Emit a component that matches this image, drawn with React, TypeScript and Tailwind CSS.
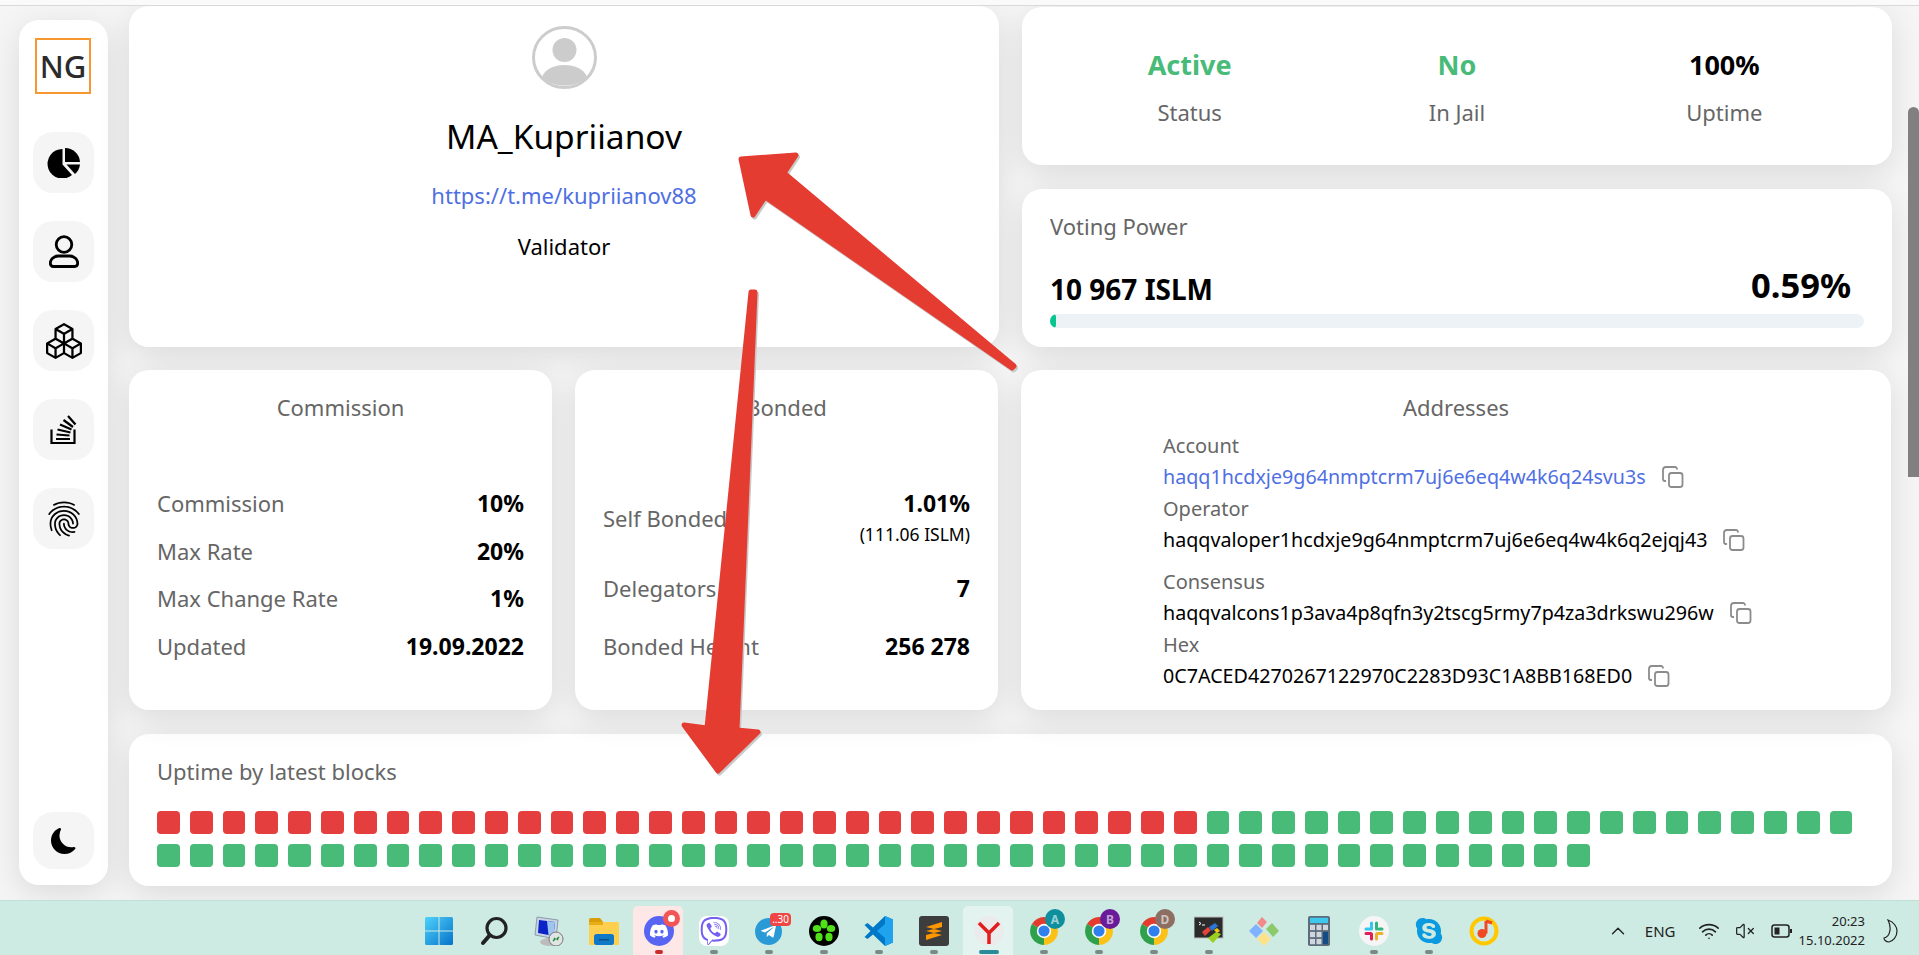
import { ChevronUp, VolumeX, Wifi } from "lucide-react";
import { BsBoxes, BsMoonFill } from "react-icons/bs";
import { FaSkype, FaTelegramPlane } from "react-icons/fa";
import { MdFingerprint } from "react-icons/md";
import { SiDiscord, SiViber } from "react-icons/si";

const card = "rounded-[20px] bg-white shadow-[0_8px_32px_rgba(0,0,0,0.11)]";

function PieIcon() {
  return (
    <svg width="33" height="30" viewBox="0 0 33 30" fill="#000">
      <path d="M15.500 1V16.500L25 27A14.800 14.800 0 1 1 15.500 1Z" />
      <path d="M18 0A15 15 0 0 1 33 14H18Z" />
      <path d="M19.500 16.500H33A15 15 0 0 1 28 26Z" />
    </svg>
  );
}

function UserIcon() {
  return (
    <svg width="30" height="33" viewBox="0 0 30 33" fill="none" stroke="#000" strokeWidth="2.800">
      <circle cx="15" cy="9.500" r="7.800" />
      <path d="M9.500 21h11c5 0 8.200 3.500 8.200 7 0 2-1.200 3.500-3 3.500H4.300c-1.800 0-3-1.500-3-3.500 0-3.500 3.200-7 8.200-7z" />
    </svg>
  );
}

function StackIcon() {
  return (
    <svg width="27" height="31" viewBox="0 0 27 31" fill="none" stroke="#000" strokeWidth="2.200">
      <path d="M1.500 15.500V29H24.500V15.500" />
      <path d="M6 25H20M6.500 20.500L19.500 21.500M7.500 15.500L20.500 18.500M10 10.500L21.500 15.500M13.500 6L23 13M18 2L25.500 10.500" />
    </svg>
  );
}

function CopyIcon() {
  return (
    <svg width="22" height="22" viewBox="0 0 22 22" fill="none" stroke="#8c8c8c" strokeWidth="1.8" className="shrink-0">
      <rect x="7" y="7" width="13.500" height="14" rx="2.500" />
      <path d="M15 3.500V3a2 2 0 0 0-2-2H4a3 3 0 0 0-3 3v9a2 2 0 0 0 2 2h1" />
    </svg>
  );
}

function Sidebar() {
  const icons = [<PieIcon />, <UserIcon />, <BsBoxes size={36} />, <StackIcon />, <MdFingerprint size={42} />];
  return (
    <aside className={`${card} ml-[19px] mt-[14px] flex h-[865px] w-[89px] flex-col items-center pt-[18px] pb-[16px]`}>
      <div className="-ml-[1px] flex h-[56px] w-[56px] items-center justify-center border-2 border-[#f7972f] text-[31px] font-medium text-[#2b2b2b]">
        NG
      </div>
      <div className="mt-[38px] flex flex-col gap-[28px]">
        {icons.map((icon, i) => (
          <button key={i} className="flex h-[61px] w-[61px] items-center justify-center rounded-[20px] bg-[#f5f5f5] text-black">
            {icon}
          </button>
        ))}
      </div>
      <button className="mt-auto flex h-[57px] w-[61px] items-center justify-center rounded-[20px] bg-[#f5f5f5] text-black">
        <BsMoonFill size={26} />
      </button>
    </aside>
  );
}

function Profile() {
  return (
    <div className={`${card} flex h-[341px] w-[870px] flex-col items-center pt-[20px]`}>
      <svg width="65" height="63" viewBox="0 0 65 63" fill="none">
        <ellipse cx="32.500" cy="31.500" rx="31" ry="30" stroke="#cccccc" strokeWidth="3" />
        <circle cx="32.500" cy="24" r="12" fill="#cccccc" />
        <path d="M10 51c3-8 12-12 22.500-12S52 43 55 51c-6 6-14 8.500-22.500 8.500S16 57 10 51z" fill="#cccccc" />
      </svg>
      <div className="mt-[25px] text-[33.500px] leading-[44px] text-black">MA_Kupriianov</div>
      <a className="mt-[23px] text-[22px] leading-[28px] text-[#4f6fe3]">https://t.me/kupriianov88</a>
      <div className="mt-[23px] text-[22px] leading-[28px] text-black">Validator</div>
    </div>
  );
}

function Status() {
  const items = [
    { value: "Active", label: "Status", color: "text-[#48bb78]" },
    { value: "No", label: "In Jail", color: "text-[#48bb78]" },
    { value: "100%", label: "Uptime", color: "text-black" },
  ];
  return (
    <div className={`${card} grid h-[158px] grid-cols-3 px-[34px] pt-[42px]`}>
      {items.map((item) => (
        <div key={item.label} className="text-center">
          <div className={`text-[27px] font-bold leading-[32px] ${item.color}`}>{item.value}</div>
          <div className="mt-[17px] text-[22px] leading-[28px] text-[#666666]">{item.label}</div>
        </div>
      ))}
    </div>
  );
}

function VotingPower() {
  return (
    <div className={`${card} h-[158px] px-[28px] pt-[23px]`}>
      <div className="text-[22px] leading-[28px] text-[#666666]">Voting Power</div>
      <div className="mt-[25px] flex items-end justify-between pr-[13px]">
        <span className="text-[28px] font-bold leading-[32px] text-black">10 967 ISLM</span>
        <span className="text-[34.500px] font-bold leading-[40px] text-black">0.59%</span>
      </div>
      <div className="mt-[9px] h-[14px] w-full overflow-hidden rounded-[7px] bg-[#edf2f7]">
        <div className="h-full w-[6px] rounded-[7px] bg-[#06c58f]" />
      </div>
    </div>
  );
}

function StatRow({ label, value }: { label: string; value: string }) {
  return (
    <div className="flex justify-between leading-[28px]">
      <span className="text-[22px] text-[#666666]">{label}</span>
      <span className="text-[23px] font-bold text-black">{value}</span>
    </div>
  );
}

function Commission() {
  return (
    <div className={`${card} h-[340px] w-[423px] px-[28px] pt-[23px]`}>
      <div className="text-center text-[22px] leading-[28px] text-[#666666]">Commission</div>
      <div className="mt-[68px] flex flex-col gap-[19.5px]">
        <StatRow label="Commission" value="10%" />
        <StatRow label="Max Rate" value="20%" />
        <StatRow label="Max Change Rate" value="1%" />
        <StatRow label="Updated" value="19.09.2022" />
      </div>
    </div>
  );
}

function Bonded() {
  return (
    <div className={`${card} h-[340px] w-[423px] px-[28px] pt-[23px]`}>
      <div className="text-center text-[22px] leading-[28px] text-[#666666]">Bonded</div>
      <div className="mt-[68px] flex items-center justify-between">
        <span className="text-[22px] leading-[28px] text-[#666666]">Self Bonded</span>
        <div className="text-right">
          <div className="text-[23px] font-bold leading-[28px] text-black">1.01%</div>
          <div className="mt-[5px] text-[17.500px] leading-[24px] text-black">(111.06 ISLM)</div>
        </div>
      </div>
      <div className="mt-[28px]">
        <StatRow label="Delegators" value="7" />
      </div>
      <div className="mt-[30px]">
        <StatRow label="Bonded Height" value="256 278" />
      </div>
    </div>
  );
}

function Address({ label, value, link, className }: { label: string; value: string; link?: boolean; className: string }) {
  return (
    <div className={className}>
      <div className="text-[20px] leading-[28px] text-[#666666]">{label}</div>
      <div className="mt-[3px] flex items-center gap-[16px]">
        <span className={`text-[19.700px] leading-[28px] ${link ? "text-[#4f6fe3]" : "text-black"}`}>{value}</span>
        <CopyIcon />
      </div>
    </div>
  );
}

function Addresses() {
  return (
    <div className={`${card} h-[340px] w-[870px] pt-[23px]`}>
      <div className="text-center text-[22px] leading-[28px] text-[#666666]">Addresses</div>
      <div className="ml-[142px]">
        <Address className="mt-[11px]" label="Account" value="haqq1hcdxje9g64nmptcrm7uj6e6eq4w4k6q24svu3s" link />
        <Address className="mt-[4px]" label="Operator" value="haqqvaloper1hcdxje9g64nmptcrm7uj6e6eq4w4k6q2ejqj43" />
        <Address className="mt-[14px]" label="Consensus" value="haqqvalcons1p3ava4p8qfn3y2tscg5rmy7p4za3drkswu296w" />
        <Address className="mt-[4px]" label="Hex" value="0C7ACED4270267122970C2283D93C1A8BB168ED0" />
      </div>
    </div>
  );
}

function UptimeBlocks() {
  const blocks = Array.from({ length: 96 }, (_, i) => i < 32);
  return (
    <div className={`${card} h-[152px] px-[28px] pt-[23px]`}>
      <div className="text-[22px] leading-[28px] text-[#666666]">Uptime by latest blocks</div>
      <div className="mt-[26px] flex flex-wrap gap-x-[10px] gap-y-[10px]">
        {blocks.map((red, i) => (
          <div key={i} className={`h-[23px] w-[22.800px] rounded-[4px] ${red ? "bg-[#e53e3e]" : "bg-[#48bb78]"}`} />
        ))}
      </div>
    </div>
  );
}

function Arrows() {
  return (
    <svg className="pointer-events-none absolute left-0 top-0" width="1919" height="900" viewBox="0 0 1919 900">
      <g fill="#c9c9c9" stroke="#c9c9c9" strokeWidth="5" strokeLinejoin="round" transform="translate(1.500 2)">
        <path d="M1014 366 L784 173 L796 155 L741 159 L753 215 L765 197 L1012 368 Z" />
        <path d="M755 292 L751 292 L707 728 L684 725 L718 771 L758 732 L737 730 Z" />
      </g>
      <g fill="#e53c32" stroke="#e53c32" strokeWidth="5" strokeLinejoin="round">
        <path d="M1014 366 L784 173 L796 155 L741 159 L753 215 L765 197 L1012 368 Z" />
        <path d="M755 292 L751 292 L707 728 L684 725 L718 771 L758 732 L737 730 Z" />
      </g>
    </svg>
  );
}

function WindowsIcon() {
  return (
    <svg width="30" height="30" viewBox="0 0 30 30">
      <defs>
        <linearGradient id="win" x1="0" y1="0" x2="1" y2="1">
          <stop offset="0" stopColor="#4fd2fb" />
          <stop offset="1" stopColor="#0672c9" />
        </linearGradient>
      </defs>
      <path d="M1 2.500A1.500 1.500 0 0 1 2.500 1H14.500V14.500H1zM15.500 1H27.500A1.500 1.500 0 0 1 29 2.500V14.500H15.500zM1 15.500H14.500V29H2.500A1.500 1.500 0 0 1 1 27.500zM15.500 15.500H29V27.500A1.500 1.500 0 0 1 27.500 29H15.500z" fill="url(#win)" />
    </svg>
  );
}

function SearchIcon() {
  return (
    <svg width="30" height="30" viewBox="0 0 30 30" fill="none" stroke="#222" strokeWidth="3.200" strokeLinecap="round">
      <circle cx="17.500" cy="12" r="9.500" />
      <path d="M10.500 19.500L4 27" strokeWidth="4" />
    </svg>
  );
}

function NetworkIcon() {
  return (
    <svg width="30" height="30" viewBox="0 0 30 30">
      <path d="M3 1l21 3-2 19-21-4z" fill="#c9d4e3" stroke="#7b8aa0" strokeWidth="0.800" />
      <path d="M5 4l16 2-1.500 14L4 17z" fill="#0a23c6" />
      <path d="M13 5l8 1-1.500 14-5-1z" fill="#9ec4f0" />
      <ellipse cx="16" cy="26" rx="10" ry="4" fill="#bcbcbc" />
      <circle cx="22" cy="23" r="7" fill="#dfe5e2" stroke="#777" />
      <path d="M19 25l2-2-1-1M25 21l-2 2 1 1" stroke="#1f8a3b" strokeWidth="1.500" fill="none" />
    </svg>
  );
}

function FolderIcon() {
  return (
    <svg width="30" height="30" viewBox="0 0 30 30">
      <path d="M0 4a2 2 0 0 1 2-2h9l3 4h-14z" fill="#d99e07" />
      <rect x="0" y="6" width="30" height="23" rx="1" fill="#ffd04f" />
      <rect x="0" y="6" width="14" height="3" fill="#e9ae13" />
      <rect x="5" y="18" width="20" height="11" rx="2.500" fill="#0f79c7" />
      <rect x="10" y="23" width="10" height="1.500" fill="#0a4f8a" />
    </svg>
  );
}

function DiscordIcon() {
  return (
    <div className="relative flex h-[30px] w-[30px] items-center justify-center rounded-full bg-[#5865f2] text-white">
      <SiDiscord size={18} />
      <span className="absolute right-[-6px] top-[-6px] flex h-[17px] w-[17px] items-center justify-center rounded-full bg-[#f25555]">
        <span className="h-[7px] w-[7px] rounded-full bg-white" />
      </span>
    </div>
  );
}

function ViberIcon() {
  return <SiViber size={30} className="rounded-[8px] bg-white p-[1px] text-[#7360f2]" />;
}

function TelegramIcon() {
  return (
    <div className="relative flex h-[27px] w-[27px] items-center justify-center rounded-full bg-[#2a9ad6] text-white">
      <FaTelegramPlane size={17} />
      <span className="absolute right-[-9px] top-[-5px] rounded-[4px] bg-[#f04545] px-[2px] text-[10px] leading-[13px] text-white">..30</span>
    </div>
  );
}

function IcqIcon() {
  return (
    <svg width="30" height="30" viewBox="0 0 30 30">
      <circle cx="15" cy="15" r="15" fill="#000" />
      <g fill="#4fe01a">
        <ellipse cx="15" cy="8" rx="3.600" ry="4.500" />
        <ellipse cx="8" cy="12.500" rx="4.200" ry="3.600" />
        <ellipse cx="22" cy="12.500" rx="4.200" ry="3.600" />
        <ellipse cx="10" cy="21" rx="3.600" ry="4.200" />
        <ellipse cx="20" cy="21" rx="3.600" ry="4.200" />
      </g>
    </svg>
  );
}

function VsCodeIcon() {
  return (
    <svg width="30" height="30" viewBox="0 0 30 30">
      <path d="M21 0l8 3.500v23L21 30 9 18.500 3.500 23 0.500 21 6.500 15 0.500 9 3.500 7 9 11.500z" fill="#0078c8" />
      <path d="M21 0l8 3.500v23L21 30zM21 8l-8 7 8 7z" fill="#1fa3ef" fillRule="evenodd" />
    </svg>
  );
}

function SublimeIcon() {
  return (
    <div className="flex h-[30px] w-[30px] items-center justify-center rounded-[3px] bg-[#3d3d3d]">
      <svg width="20" height="20" viewBox="0 0 20 20" fill="#ff9800">
        <path d="M18 1v5L2 10V6zM2 10l16 4v-4L2 6zM18 10v4L2 19v-5z" />
      </svg>
    </div>
  );
}

function YandexIcon() {
  return (
    <svg width="30" height="30" viewBox="0 0 30 30">
      <circle cx="15" cy="15" r="15" fill="#ebebeb" />
      <path d="M5 7l10 10 10-10M15 17v11" fill="none" stroke="#e01e1e" strokeWidth="3.500" />
    </svg>
  );
}

function ChromeIcon({ letter, color }: { letter: string; color: string }) {
  return (
    <svg width="30" height="30" viewBox="0 0 30 30" className="overflow-visible">
      <path d="M15 15L2.900 8A14 14 0 0 1 27.100 8Z" fill="#e33b2e" />
      <path d="M15 15L27.100 8A14 14 0 0 1 15 29Z" fill="#fbc116" />
      <path d="M15 15L15 29A14 14 0 0 1 2.900 8Z" fill="#2fa04c" />
      <circle cx="15" cy="15" r="7.200" fill="#fff" />
      <circle cx="15" cy="15" r="5.600" fill="#2f80ed" />
      <circle cx="26" cy="3" r="10" fill={color} />
      <text x="26" y="7.500" textAnchor="middle" fontSize="12" fontWeight="700" fill="rgba(255,255,255,0.6)">
        {letter}
      </text>
    </svg>
  );
}

function TerminalIcon() {
  return (
    <svg width="30" height="30" viewBox="0 0 30 30">
      <rect x="0" y="1" width="29" height="21" fill="#2b2b2b" stroke="#bdbdbd" strokeWidth="1" />
      <path d="M5 6l2 1.500-2 1.500" stroke="#fff" fill="none" />
      <path d="M8 9h3" stroke="#fff" />
      <path d="M8 16l6-5 3 3-6 6z" fill="#e8433a" />
      <path d="M15 11l6-4 3 3-6 5z" fill="#2c76d8" />
      <path d="M14 22l8-6 5 2-8 9z" fill="#9bd021" />
      <path d="M20 14l3-2 3 3-3 2z" fill="#f3c613" />
    </svg>
  );
}

function ToolIcon() {
  return (
    <svg width="30" height="30" viewBox="0 0 30 30">
      <path d="M0 15l7-7 7 7-7 7z" fill="#7fb2ff" />
      <path d="M17 9l6-6 7 8-6 6z" fill="#8bc96a" transform="translate(0 4)" />
      <path d="M8 7l5-6 5 5-5 6z" fill="#f28a8a" />
      <path d="M8 23l7-7 7 7-7 7z" fill="#fde28a" />
    </svg>
  );
}

function CalculatorIcon() {
  return (
    <svg width="22" height="30" viewBox="0 0 22 34" preserveAspectRatio="none">
      <rect width="22" height="34" rx="2" fill="#5d6b7a" />
      <rect x="2" y="2" width="18" height="6" fill="#3fc8ee" />
      <g fill="#cfd6dd">
        <rect x="2" y="10" width="5" height="6" />
        <rect x="8.500" y="10" width="5" height="6" />
        <rect x="15" y="10" width="5" height="6" />
        <rect x="2" y="18" width="5" height="6" />
        <rect x="8.500" y="18" width="5" height="6" />
        <rect x="2" y="26" width="5" height="6" />
        <rect x="8.500" y="26" width="5" height="6" />
      </g>
      <rect x="15" y="18" width="5" height="14" fill="#124c86" />
    </svg>
  );
}

function SlackIcon() {
  return (
    <svg width="30" height="30" viewBox="0 0 30 30">
      <circle cx="15" cy="15" r="15" fill="#f5f5f5" />
      <g strokeWidth="3" strokeLinecap="round">
        <path d="M12.500 7v6M7 13h5" stroke="#36c5f0" />
        <path d="M17.500 7v6M23 13h-3" stroke="#2eb67d" />
        <path d="M12.500 23v-5M7 17.500h5" stroke="#e01e5a" />
        <path d="M17.500 23v-5M23 17.500h-5" stroke="#ecb22e" />
      </g>
    </svg>
  );
}

function MusicIcon() {
  return (
    <svg width="30" height="30" viewBox="0 0 30 30" fill="none">
      <circle cx="15" cy="15" r="12.500" stroke="#ffc800" strokeWidth="4" />
      <path d="M17 5v12.500" stroke="#f04a23" strokeWidth="3" />
      <path d="M17 5l6 2" stroke="#f04a23" strokeWidth="3" />
      <circle cx="13" cy="17.500" r="4.500" fill="#f04a23" />
    </svg>
  );
}

function Taskbar() {
  const apps = [
    { icon: <WindowsIcon /> },
    { icon: <SearchIcon /> },
    { icon: <NetworkIcon /> },
    { icon: <FolderIcon /> },
    { icon: <DiscordIcon />, dot: "w-[8px] bg-[#c92c2c]", bg: "bg-[#fde7e7]" },
    { icon: <ViberIcon />, dot: "w-[8px] bg-[#7b8a85]" },
    { icon: <TelegramIcon />, dot: "w-[8px] bg-[#7b8a85]" },
    { icon: <IcqIcon />, dot: "w-[8px] bg-[#7b8a85]" },
    { icon: <VsCodeIcon />, dot: "w-[8px] bg-[#7b8a85]" },
    { icon: <SublimeIcon />, dot: "w-[8px] bg-[#7b8a85]" },
    { icon: <YandexIcon />, dot: "w-[20px] bg-[#2b8a9a]", bg: "bg-[#e3f3f0]" },
    { icon: <ChromeIcon letter="A" color="#0d8f9e" />, dot: "w-[8px] bg-[#7b8a85]" },
    { icon: <ChromeIcon letter="B" color="#6a1b9a" />, dot: "w-[8px] bg-[#7b8a85]" },
    { icon: <ChromeIcon letter="D" color="#8d6e63" />, dot: "w-[8px] bg-[#7b8a85]" },
    { icon: <TerminalIcon />, dot: "w-[8px] bg-[#7b8a85]" },
    { icon: <ToolIcon /> },
    { icon: <CalculatorIcon /> },
    { icon: <SlackIcon />, dot: "w-[8px] bg-[#7b8a85]" },
    { icon: <FaSkype size={30} className="text-[#0a9ae0]" />, dot: "w-[8px] bg-[#7b8a85]" },
    { icon: <MusicIcon /> },
  ];
  return (
    <footer className="flex h-[55px] items-center border-t border-[#c0e0d6] bg-[#cdebe3] text-[#222222]">
      <div className="ml-[411px] flex">
        {apps.map((app, i) => (
          <div key={i} className="relative flex h-[54px] w-[55px] items-center justify-center pt-[6px]">
            {app.bg && <span className={`absolute bottom-0 left-[2px] top-[5px] w-[50px] rounded-t-[5px] ${app.bg}`} />}
            <span className="relative flex items-center justify-center">{app.icon}</span>
            {app.dot && <span className={`absolute bottom-[1px] h-[4px] rounded-full ${app.dot}`} />}
          </div>
        ))}
      </div>
      <div className="ml-auto flex items-center pr-[20px] pt-[6px]">
        <ChevronUp size={22} strokeWidth={1.500} />
        <span className="ml-[16px] text-[15px]">ENG</span>
        <Wifi size={22} strokeWidth={1.800} className="ml-[22px]" />
        <VolumeX size={20} strokeWidth={1.500} className="ml-[15px]" />
        <svg width="22" height="14" viewBox="0 0 22 14" fill="none" stroke="#222" strokeWidth="1.500" className="ml-[16px]">
          <rect x="1" y="1" width="17" height="12" rx="2.500" />
          <rect x="3.500" y="3.500" width="5" height="7" fill="#222" stroke="none" />
          <path d="M20 5v4" strokeWidth="2" />
        </svg>
        <div className="ml-[6px] text-right text-[13px] leading-[19px]">
          <div>20:23</div>
          <div>15.10.2022</div>
        </div>
        <svg width="16" height="24" viewBox="0 0 16 24" fill="none" stroke="#222" strokeWidth="1.200" className="ml-[18px]">
          <path d="M5 1c6 2 9 7 9 11 0 6-4 10-8 11-3 0-5-2-5-4 6-1 8-10 4-18z" />
        </svg>
      </div>
    </footer>
  );
}

export default function App() {
  return (
    <div className="relative flex h-[955px] w-full flex-col overflow-hidden bg-[#f5f5f5] font-['Noto_Sans',sans-serif]">
      <div className="relative z-10 h-[6px] shrink-0 border-b border-[#d9d9d9] bg-[#fafafa]" />
      <main className="flex h-[894px] shrink-0 overflow-hidden">
        <Sidebar />
        <div className="ml-[21px] w-[1763px]">
          <div className="flex gap-[23px]">
            <Profile />
            <div className="flex w-[870px] flex-col gap-[24px] pt-[1px]">
              <Status />
              <VotingPower />
            </div>
          </div>
          <div className="mt-[23px] flex gap-[23px]">
            <div className="flex gap-[23px]">
              <Commission />
              <Bonded />
            </div>
            <Addresses />
          </div>
          <div className="mt-[24px]">
            <UptimeBlocks />
          </div>
        </div>
      </main>
      <Taskbar />
      <Arrows />
      <div className="absolute right-0 top-[107px] h-[370px] w-[11px] rounded-t-[6px] bg-[#808080]" />
    </div>
  );
}
